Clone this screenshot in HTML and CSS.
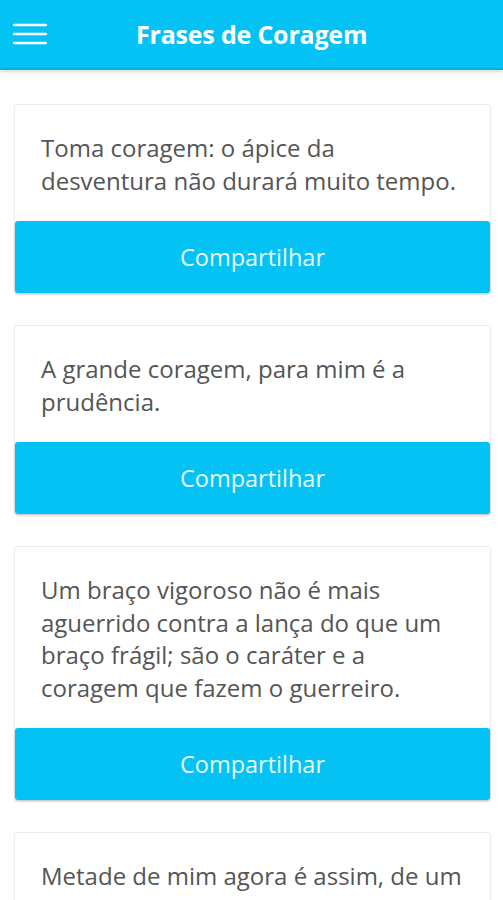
FILE: index.html
```html
<!DOCTYPE html>
<html lang="pt">
<head>
    <meta charset="UTF-8">
    <meta name="viewport" content="width=device-width, initial-scale=1.0">
    <title>Frases de Coragem</title>
    <link rel="stylesheet" href="styles.css">
</head>
<body>
    <header class="topbar">
        <button class="menu-btn" aria-label="Menu">
            <svg width="34" height="22" viewBox="0 0 34 22">
                <path d="M1 2H33M1 11H33M1 20H33" stroke="#fff" stroke-width="2.5" stroke-linecap="round"/>
            </svg>
        </button>
        <h1>Frases de Coragem</h1>
    </header>

    <main class="list">
        <div class="card">
            <p class="quote">Toma coragem: o ápice da desventura não durará muito tempo.</p>
            <button class="share">Compartilhar</button>
        </div>
        <div class="card">
            <p class="quote">A grande coragem, para mim é a prudência.</p>
            <button class="share">Compartilhar</button>
        </div>
        <div class="card">
            <p class="quote">Um braço vigoroso não é mais aguerrido contra a lança do que um braço frágil; são o caráter e a coragem que fazem o guerreiro.</p>
            <button class="share">Compartilhar</button>
        </div>
        <div class="card">
            <p class="quote">Metade de mim agora é assim, de um lado a poesia, e do outro a saudade de quem tem coragem.</p>
            <button class="share">Compartilhar</button>
        </div>
    </main>
</body>
</html>
```

FILE: styles.css
```css
body {
    margin: 0;
    font-family: "Open Sans", "Noto Sans", sans-serif;
    background-color: #fff;
}

.topbar {
    height: 68px;
    background-color: #04c2f4;
    display: flex;
    align-items: center;
    box-shadow: 0 2px 3px rgba(0, 0, 0, 0.15);
    border-bottom: 2px solid #0ab0dc;
}
.menu-btn {
    background: none;
    border: none;
    padding: 0;
    margin-left: 13px;
    display: flex;
}
.topbar h1 {
    margin: 0 0 0 89px;
    color: #fff;
    font-size: 25px;
    font-weight: 700;
    letter-spacing: -0.2px;
}

.list {
    padding: 34px 12px 0 14px;
}
.card {
    border: 1px solid #ececec;
    border-radius: 3px;
    margin-bottom: 31px;
    box-shadow: 0 1px 2px rgba(0, 0, 0, 0.05);
}
.quote {
    margin: 0;
    padding: 27px 23px 24px 26px;
    color: #555;
    font-size: 24px;
    line-height: 32.5px;
}
.share {
    display: block;
    width: 100%;
    height: 72px;
    background-color: #04c2f4;
    border: none;
    border-radius: 3px;
    color: #e8fbff;
    font-family: inherit;
    font-size: 23.5px;
    box-shadow: 0 1px 3px rgba(0, 0, 0, 0.2);
}
```
